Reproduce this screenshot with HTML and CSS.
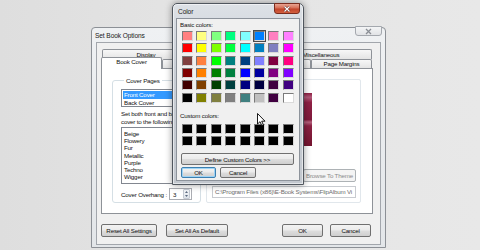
FILE: index.html
```html
<!DOCTYPE html>
<html>
<head>
<meta charset="utf-8">
<link rel="stylesheet" href="styles.css">
<title>Set Book Options</title>
</head>
<body>
<div class="desk">

  <div class="win main-win">
    <div class="titlebar">
      <span class="title">Set Book Options</span>
      <span class="close-btn idle">
        <svg width="9" height="7" viewBox="0 0 9 7"><path d="M2 1 L7 6 M7 1 L2 6" stroke="#8a8e94" stroke-width="1.3"/></svg>
      </span>
    </div>
    <div class="client">
      <div class="tabctl">
        <div class="tabrow back">
          <div class="tab" style="width:88px">Display</div>
          <div class="tab" style="width:80px">Sound</div>
          <div class="tab" style="width:102px">Miscellaneous</div>
        </div>
        <div class="tabrow front">
          <div class="tab sel" style="width:61px">Book Cover</div>
          <div class="tab" style="width:74px">Background</div>
          <div class="tab" style="width:75px">Page Layout</div>
          <div class="tab" style="width:61px">Page Margins</div>
        </div>
        <div class="panel">
          <fieldset class="group cover">
            <legend>Cover Pages</legend>
            <div class="listbox pages">
              <div class="item picked">Front Cover</div>
              <div class="item">Back Cover</div>
            </div>
            <p class="desc">Set both front and back<br>cover to the following:</p>
            <div class="listbox themes">
              <div class="item">Beige</div>
              <div class="item">Flowery</div>
              <div class="item">Fur</div>
              <div class="item">Metallic</div>
              <div class="item">Purple</div>
              <div class="item">Techno</div>
              <div class="item">Wigger</div>
            </div>
            <div class="overhang">
              <span>Cover Overhang :</span>
              <div class="spin">
                <span class="spin-val">3</span>
                <span class="spin-arrows">
                  <svg width="5" height="10" viewBox="0 0 5 10"><path d="M2.5 2 L4 4 L1 4 Z M2.5 8 L4 6 L1 6 Z" fill="#5c6a80"/></svg>
                </span>
              </div>
            </div>
          </fieldset>
          <div class="group preview">
            <div class="cover-img"></div>
            <div class="btn disabled browse">Browse To Theme</div>
            <div class="pathbox">C:\Program Files (x86)\E-Book Systems\FlipAlbum Vi</div>
          </div>
        </div>
      </div>
      <div class="btnrow">
        <div class="btn reset">Reset All Settings</div>
        <div class="btn setdef">Set All As Default</div>
        <div class="btn ok">OK</div>
        <div class="btn cancel">Cancel</div>
      </div>
    </div>
  </div>

  <div class="win color-win">
    <div class="titlebar">
      <span class="title">Color</span>
      <span class="close-btn red">
        <svg width="10" height="8" viewBox="0 0 10 8"><path d="M2.5 1.5 L7.5 6.5 M7.5 1.5 L2.5 6.5" stroke="#5a1a10" stroke-width="2.4"/><path d="M2.5 1.5 L7.5 6.5 M7.5 1.5 L2.5 6.5" stroke="#fff" stroke-width="1.3"/></svg>
      </span>
    </div>
    <div class="client">
      <div class="lbl">Basic colors:</div>
      <div class="swatches basic">
        <span style="background:#ff8080"></span><span style="background:#ffff80"></span><span style="background:#80ff80"></span><span style="background:#00ff80"></span><span style="background:#80ffff"></span><span class="cur" style="background:#0080ff"></span><span style="background:#ff80c0"></span><span style="background:#ff80ff"></span>
        <span style="background:#ff0000"></span><span style="background:#ffff00"></span><span style="background:#80ff00"></span><span style="background:#00ff40"></span><span style="background:#00ffff"></span><span style="background:#0080c0"></span><span style="background:#8080c0"></span><span style="background:#ff00ff"></span>
        <span style="background:#804040"></span><span style="background:#ff8040"></span><span style="background:#00ff00"></span><span style="background:#008080"></span><span style="background:#004080"></span><span style="background:#8080ff"></span><span style="background:#800040"></span><span style="background:#ff0080"></span>
        <span style="background:#800000"></span><span style="background:#ff8000"></span><span style="background:#008000"></span><span style="background:#008040"></span><span style="background:#0000ff"></span><span style="background:#0000a0"></span><span style="background:#800080"></span><span style="background:#8000ff"></span>
        <span style="background:#400000"></span><span style="background:#804000"></span><span style="background:#004000"></span><span style="background:#004040"></span><span style="background:#000080"></span><span style="background:#000040"></span><span style="background:#400040"></span><span style="background:#400080"></span>
        <span style="background:#000000"></span><span style="background:#808000"></span><span style="background:#808040"></span><span style="background:#808080"></span><span style="background:#408080"></span><span style="background:#c0c0c0"></span><span style="background:#400040"></span><span style="background:#ffffff"></span>
      </div>
      <div class="lbl custom-lbl">Custom colors:</div>
      <div class="swatches custom">
        <span></span><span></span><span></span><span></span><span></span><span></span><span></span><span></span>
        <span></span><span></span><span></span><span></span><span></span><span></span><span></span><span></span>
      </div>
      <div class="btn define">Define Custom Colors &gt;&gt;</div>
      <div class="okrow">
        <div class="btn ok default">OK</div>
        <div class="btn cancel">Cancel</div>
      </div>
    </div>
  </div>

  <svg class="cursor" width="9" height="14" viewBox="0 0 9 14">
    <path d="M0.5 0.5 L0.5 11 L3 8.7 L4.8 12.6 L6.4 11.9 L4.7 8.2 L8 8.2 Z" fill="#fff" stroke="#000" stroke-width="0.9" stroke-linejoin="round"/>
  </svg>

</div>
</body>
</html>
```

FILE: styles.css
```css
* {
  box-sizing: border-box;
  margin: 0;
  padding: 0;
}

body {
  width: 480px;
  height: 250px;
  overflow: hidden;
  background: linear-gradient(90deg, #dedede 0%, #e4e4e4 40%, #e8e8e8 100%);
  font-family: "Liberation Sans", Arial, sans-serif;
  font-size: 6.2px;
  letter-spacing: -0.18px;
  color: #111;
}

.desk {
  position: relative;
  width: 480px;
  height: 250px;
}

/* windows */
.win {
  position: absolute;
  display: flex;
  flex-direction: column;
}

.titlebar {
  display: flex;
  align-items: center;
}

.title {
  font-size: 6.6px;
  letter-spacing: -0.1px;
  color: #1a1a1a;
}

.close-btn {
  margin-left: auto;
  align-self: flex-start;
  display: flex;
  align-items: center;
  justify-content: center;
  border-radius: 0 0 3px 3px;
}

.close-btn.idle {
  width: 27px;
  height: 10px;
  margin-top: -2px;
  margin-right: -1px;
  border: 1px solid #a4a8ae;
  background: linear-gradient(#f4f5f6, #e1e3e6);
}

.close-btn.red {
  width: 26px;
  height: 11px;
  margin-top: -1px;
  border: 1px solid #7a2c1e;
  background: linear-gradient(#e9a492 0%, #d66e55 45%, #c2432a 55%, #d2603f 100%);
}

.main-win {
  left: 91px;
  top: 27px;
  width: 295px;
  height: 221px;
  border: 1px solid #8c9096;
  border-radius: 4px 4px 0 0;
  background: linear-gradient(#eff1f3, #e3e6e9);
  padding: 0 4px 2px 4px;
}

.main-win .titlebar {
  height: 14px;
}

.main-win .title {
  margin-left: -1px;
}

.client {
  flex: 1;
  border: 1px solid #a2a6ac;
  background: #f0f0f0;
  display: flex;
  flex-direction: column;
}

.main-win .client {
  padding: 6px 7px 0 4px;
}

/* tabs */
.tabctl {
  width: 272px;
  display: flex;
  flex-direction: column;
}

.tabrow {
  display: flex;
}

.tabrow.back {
  height: 10px;
  padding-left: 1px;
}

.tabrow.front {
  height: 9px;
}

.tab {
  border: 1px solid #8e9298;
  border-bottom: none;
  border-radius: 2px 2px 0 0;
  background: linear-gradient(#f7f7f7, #e4e4e4);
  text-align: center;
  line-height: 9px;
  white-space: nowrap;
  overflow: hidden;
}

.tabrow.front .tab {
  line-height: 8px;
}

.tab.sel {
  position: relative;
  z-index: 2;
  margin-top: -2px;
  height: 12px;
  background: #fff;
  line-height: 10px;
}

.panel {
  height: 146px;
  border: 1px solid #8e9298;
  background: #fff;
  padding: 8px 0 0 10px;
  display: flex;
  align-items: flex-start;
}

.group.cover {
  width: 89px;
  height: 126px;
  border: 1px solid #d5dfe5;
  border-radius: 3px;
  padding: 0 5px 0 8px;
}

.group.cover legend {
  margin-left: 3px;
  padding: 0 2px;
  line-height: 7px;
}

.listbox {
  width: 74px;
  border: 1px solid #828790;
  background: #fff;
}

.listbox.pages {
  height: 18px;
  margin-top: 5px;
  padding: 1px 1px 0 1px;
}

.listbox.pages .item {
  line-height: 7.5px;
  padding-left: 1px;
}

.item.picked {
  background: #3399ff;
  color: #fff;
}

.desc {
  margin-top: 3px;
  line-height: 7.5px;
  white-space: nowrap;
}

.listbox.themes {
  height: 57px;
  margin-top: 2px;
  padding: 2px 0 0 2px;
}

.listbox.themes .item {
  line-height: 7.2px;
}

.overhang {
  margin-top: 4px;
  height: 12px;
  display: flex;
  align-items: center;
  white-space: nowrap;
}

.spin {
  margin-left: 2px;
  width: 23px;
  height: 12px;
  border: 1px solid #abadb3;
  background: #fff;
  display: flex;
  align-items: center;
}

.spin-val {
  padding-left: 3px;
  flex: 1;
}

.spin-arrows {
  width: 7px;
  height: 10px;
  margin-right: 1px;
  border: 1px solid #c5cad3;
  border-radius: 1px;
  background: linear-gradient(#f4f6f9, #dfe4ea);
  display: flex;
  align-items: center;
  justify-content: center;
}

.group.preview {
  width: 155px;
  height: 124px;
  margin-top: 2px;
  margin-left: 5px;
  border: 1px solid #e1e7ec;
  border-radius: 2px;
  display: flex;
  flex-direction: column;
}

.cover-img {
  width: 54px;
  height: 53px;
  margin: 13px 0 0 51px;
  background: linear-gradient(#8e1e42 0%, #b25a7a 8%, #8f2145 18%, #801a3c 50%, #b5627e 55%, #8c2244 62%, #74142f 100%);
}

.browse {
  align-self: flex-end;
  width: 53px;
  height: 13px;
  margin: 23px 4px 0 0;
}

.pathbox {
  width: 144px;
  height: 12px;
  margin: 4px 0 0 5px;
  border: 1px solid #c8cbd0;
  background: #fff;
  color: #6d6d6d;
  line-height: 10px;
  padding-left: 2px;
  white-space: nowrap;
  overflow: hidden;
}

/* buttons */
.btn {
  border: 1px solid #707070;
  border-radius: 2px;
  background: linear-gradient(#f3f3f3 0%, #ebebeb 48%, #dddddd 52%, #cfcfcf 100%);
  display: flex;
  align-items: center;
  justify-content: center;
  white-space: nowrap;
}

.btn.disabled {
  border-color: #adb2b5;
  background: #f4f4f4;
  color: #8a8a8a;
}

.btnrow {
  margin-top: 10px;
  height: 13px;
  display: flex;
  padding-right: 2px;
}

.btn.reset {
  width: 56px;
}

.btn.setdef {
  width: 62px;
  margin-left: 9px;
}

.btnrow .btn.ok {
  width: 41px;
  margin-left: auto;
}

.btnrow .btn.cancel {
  width: 41px;
  margin-left: 7px;
}

/* color dialog */
.color-win {
  left: 172px;
  top: 3px;
  width: 132px;
  height: 182px;
  border: 1px solid #50565e;
  border-radius: 5px 5px 0 0;
  background: linear-gradient(#dde1e6 0%, #c9ced5 40%, #c2c7ce 100%);
  box-shadow: 0 0 7px rgba(0, 0, 0, 0.4), inset 0 0 0 1px rgba(255, 255, 255, 0.55);
  padding: 0 3px 3px 3px;
}

.color-win .titlebar {
  height: 16px;
}

.color-win .title {
  padding-left: 2px;
}

.color-win .client {
  border-color: #8d939b;
  padding: 2px 3px;
}

.lbl {
  line-height: 7px;
}

.swatches {
  display: grid;
  grid-template-columns: repeat(8, 11px);
  column-gap: 3.4px;
  margin-left: 2px;
}

.swatches span {
  border: 1px solid;
  border-color: #7a7a7a #dadada #dadada #7a7a7a;
}

.swatches.basic {
  grid-auto-rows: 10px;
  row-gap: 2.3px;
  margin-top: 3px;
}

.swatches span.cur {
  box-shadow: 0 0 0 1px #4a4a4a;
}

.custom-lbl {
  margin-top: 9.5px;
}

.swatches.custom {
  grid-auto-rows: 10px;
  row-gap: 2px;
  margin-top: 5px;
}

.swatches.custom span {
  background: #000;
}

.btn.define {
  width: 113px;
  height: 12px;
  margin: 7px 0 0 1px;
}

.okrow {
  display: flex;
  margin: 2px 0 0 1px;
  height: 11px;
}

.okrow .btn.ok {
  width: 35px;
}

.btn.default {
  border-color: #3c7fb1;
  box-shadow: inset 0 0 0 1px #9fd4f5;
}

.okrow .btn.cancel {
  width: 36px;
  margin-left: 4px;
}

.cursor {
  position: absolute;
  left: 257px;
  top: 113px;
}
```
